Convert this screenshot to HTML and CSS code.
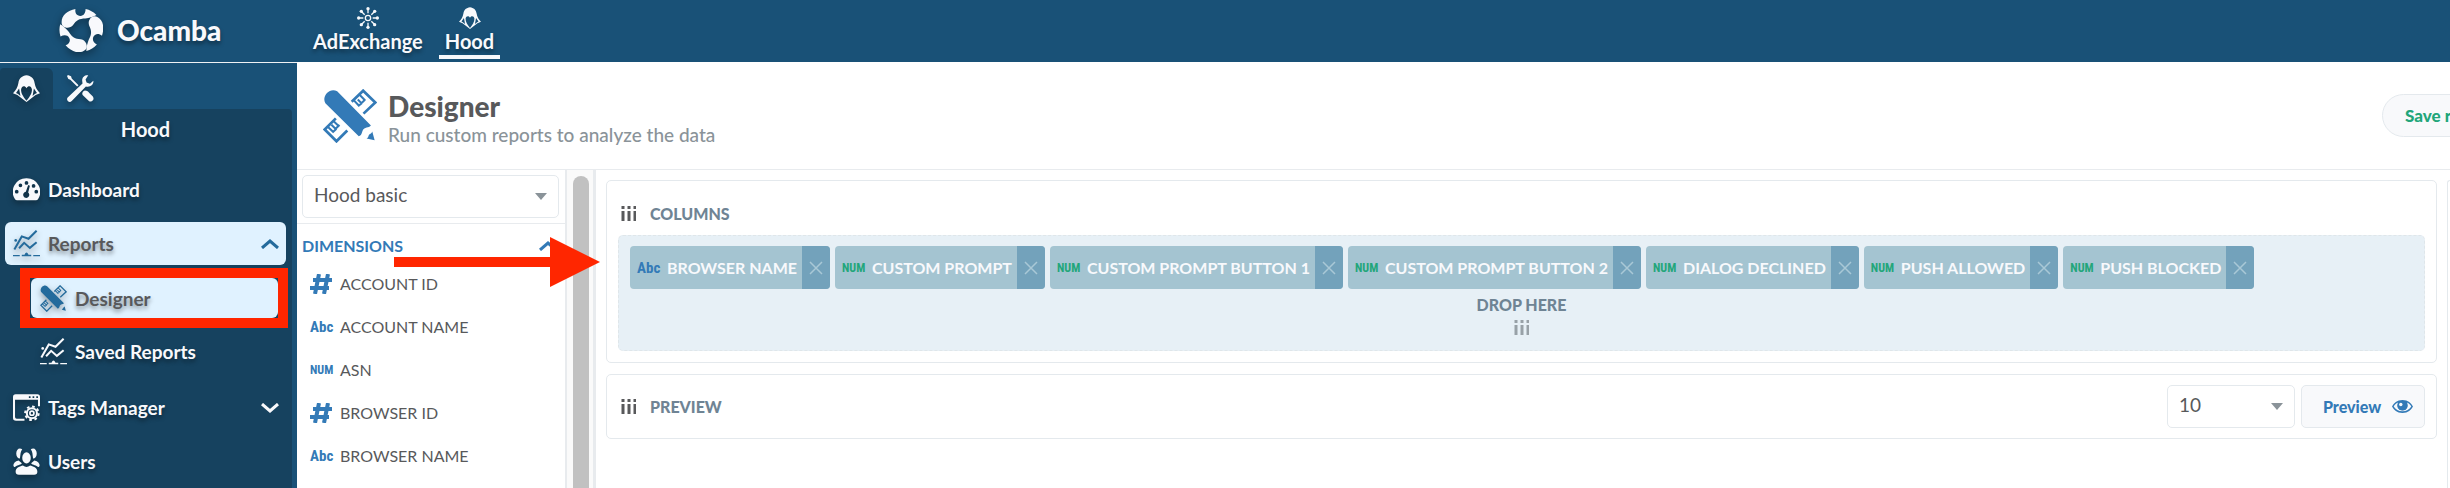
FILE: index.html
```html
<!DOCTYPE html>
<html lang="en">
<head>
<meta charset="utf-8">
<title>Ocamba Hood - Designer</title>
<link rel="stylesheet" href="styles.css">
</head>
<body>
<svg class="defs" aria-hidden="true">
  <symbol id="logo" viewBox="0 0 134 134">
    <g id="logo-arm"><path d="M114 21A66 66 0 0 0 81 3C81 14 76 24 65 24C54 24 48 15 50 3C26 8 8 22 8 42C6 62 32 66 43 52C52 38 62 32 80 32C92 30 104 27 114 21Z"/></g>
    <use href="#logo-arm" transform="rotate(120 67 67)"/>
    <use href="#logo-arm" transform="rotate(240 67 67)"/>
  </symbol>
  <symbol id="hood" viewBox="0 0 80 80">
    <path fill-rule="evenodd" d="M40 1C27 3 18 9 16 24C14 37 8 46 0 54L13 59L40 80L67 59L80 54C72 46 66 37 64 24C62 9 53 3 40 1ZM40 39C34 30 26 33 24 42C23 55 32 66 40 76C48 66 57 55 56 42C54 33 46 30 40 39ZM18 40L9 53L15 56L22 62ZM62 40L71 53L65 56L58 62Z"/>
  </symbol>
  <symbol id="tools" viewBox="0 0 80 80">
    <path d="M3 0L12 4L14 10L34 30L30 34L10 14L4 12L0 3Z"/>
    <path d="M63 1C54 -1 44 6 45 17L46 25L2 67C-1 71 0 75 3 78C7 81 11 80 14 77L56 34C68 38 80 28 78 17L68 26L58 22L55 13Z"/>
    <path d="M53 46C60 46 63 49 66 53L76 63C84 73 72 84 64 76L47 60C43 56 46 48 53 46Z"/>
  </symbol>
  <symbol id="exchange" viewBox="0 0 66 66">
    <g fill="none" stroke="currentColor" stroke-width="4">
      <circle cx="33" cy="33" r="8"/>
      <path d="M33 19V6M33 47V60M19 33H6M47 33H60M23 23L14 14M43 43L52 52M43 23L52 14M23 43L14 52"/>
    </g>
    <circle cx="33" cy="5" r="5"/><circle cx="33" cy="61" r="5"/><circle cx="5" cy="33" r="5"/><circle cx="61" cy="33" r="5"/>
    <circle cx="13" cy="13" r="5"/><circle cx="53" cy="53" r="5"/><circle cx="53" cy="13" r="5"/><circle cx="13" cy="53" r="5"/>
  </symbol>
  <symbol id="designer" viewBox="0 0 160 160">
    <path d="M7 42C-5 22 20 -6 42 7L142 108C136 116 122 112 118 122C114 130 116 136 106 140Z"/>
    <path d="M146 126L153 152L129 147C135 144 134 139 137 135C140 132 144 132 146 126Z"/>
    <g fill="none" stroke="currentColor" stroke-width="8">
      <path d="M85 38L119 5L155 40L120 73"/>
      <path d="M38 87L5 120L40 155L72 123"/>
      <path stroke-width="6" d="M91 33L106 49L115 42M103 31L114 42L125 31M109 18L125 34"/>
      <path stroke-width="6" d="M14 112L30 127L40 118M25 106L37 118L49 107M30 94L48 111"/>
    </g>
  </symbol>
  <symbol id="reports" viewBox="0 0 80 80">
    <g fill="none" stroke="currentColor" stroke-width="6">
      <path d="M4 58L26 19L46 26L70 2M18 54L33 38L50 53L70 36"/>
      <path stroke-width="4" d="M0 76H20M60 76H80"/>
    </g>
    <path d="M26 78V73H34Q40 60 46 73H54V78Z"/><circle cx="8" cy="31" r="4"/>
  </symbol>
  <symbol id="dashboard" viewBox="0 0 80 66">
    <path fill-rule="evenodd" d="M40 0A40 40 0 0 0 6 62Q8 65 12 65H68Q72 65 74 62A40 40 0 0 0 40 0ZM40 8a5.500 5.500 0 1 1 0 11a5.500 5.500 0 1 1 0-11ZM22 15a5.500 5.500 0 1 1 0 11a5.500 5.500 0 1 1 0-11ZM11 34a5.500 5.500 0 1 1 0 11a5.500 5.500 0 1 1 0-11ZM61 17a5.500 5.500 0 1 1 0 11a5.500 5.500 0 1 1 0-11ZM69 34a5.500 5.500 0 1 1 0 11a5.500 5.500 0 1 1 0-11ZM45 20L50 22L45 42A9 9 0 1 1 38 40Z"/>
  </symbol>
  <symbol id="tags" viewBox="0 0 80 80">
    <path fill-rule="evenodd" d="M8 1H72Q80 1 80 9V36H74V17H6V68Q6 73 11 73H34V79H9Q0 79 0 71V9Q0 1 8 1ZM47 7V12H52V7ZM58 7V12H63V7ZM69 7V12H74V7Z"/>
    <g fill="none" stroke="currentColor"><circle cx="56" cy="57" r="15" stroke-width="6"/><circle cx="56" cy="57" r="6" stroke-width="5"/>
    <circle cx="56" cy="57" r="20" stroke-width="6" stroke-dasharray="7.800 7.900"/></g>
  </symbol>
  <symbol id="users" viewBox="0 0 82 82">
    <ellipse cx="41" cy="30" rx="13" ry="17"/>
    <path d="M8 72C8 58 22 56 30 53Q41 62 52 53C60 56 74 58 74 72Q74 81 64 81H18Q8 81 8 72Z"/>
    <path d="M28 4C18 -3 9 6 10 18C10 26 15 32 21 32C23 20 22 12 28 4ZM54 4C64 -3 73 6 72 18C72 26 67 32 61 32C59 20 60 12 54 4Z"/>
    <path d="M17 38L27 46C22 52 10 52 6 58C-2 58 -1 42 17 38ZM65 38L55 46C60 52 72 52 76 58C84 58 83 42 65 38Z"/>
  </symbol>
  <symbol id="chevron" viewBox="0 0 18 10"><path fill="none" stroke="currentColor" stroke-width="3" d="M1 1L9 8L17 1"/></symbol>
  <symbol id="hash" viewBox="0 0 22 20"><path fill="none" stroke="currentColor" stroke-width="4" d="M3 6H22M0 14H19M9 0L5 20M18 0L14 20"/></symbol>
  <symbol id="grip" viewBox="0 0 15 15"><path fill="none" stroke="currentColor" stroke-width="3" d="M2 0V3M8 0V3M14 0V3M2 5V15M8 5V15M14 5V15"/></symbol>
  <symbol id="cross" viewBox="0 0 14 14"><path fill="none" stroke="currentColor" stroke-width="1.500" d="M1 1L13 13M13 1L1 13"/></symbol>
  <symbol id="caret" viewBox="0 0 12 7"><path d="M0 0H12L6 7Z"/></symbol>
  <symbol id="eye" viewBox="0 0 62 38"><path fill-rule="evenodd" d="M31 0C48 0 56 9 62 19C56 29 48 38 31 38S6 29 0 19C6 9 14 0 31 0ZM18 7C11 10 8 14 5 19C11 28 19 33 31 33S51 28 57 19C54 14 51 10 44 7C50 17 45 30 31 30S12 17 18 7Z"/><circle cx="31" cy="17" r="14"/><circle cx="26" cy="13" r="5" fill="#f8f9fb"/></symbol>
</svg>

<header class="topbar">
  <a class="brand" href="#"><svg class="brand-logo"><use href="#logo"/></svg><span>Ocamba</span></a>
  <nav class="apps" aria-label="Applications">
    <a class="app" href="#"><svg class="app-icon"><use href="#exchange"/></svg><span>AdExchange</span></a>
    <a class="app app-active" href="#" aria-current="page"><svg class="app-icon"><use href="#hood"/></svg><span>Hood</span></a>
  </nav>
</header>

<div class="shell">
  <aside class="sidebar">
    <div class="side-tabs">
      <button class="side-tab side-tab-active" type="button" aria-label="Hood"><svg class="icon"><use href="#hood"/></svg></button>
      <button class="side-tab" type="button" aria-label="Settings"><svg class="icon"><use href="#tools"/></svg></button>
    </div>
    <nav class="side-panel" aria-label="Hood">
      <h2 class="side-title">Hood</h2>
      <a class="item" href="#"><svg class="icon"><use href="#dashboard"/></svg><span>Dashboard</span></a>
      <a class="item item-active" href="#"><svg class="icon"><use href="#reports"/></svg><span>Reports</span><svg class="chevron chevron-up"><use href="#chevron"/></svg></a>
      <div class="submenu">
        <a class="item sub item-active sub-active" href="#"><svg class="icon"><use href="#designer"/></svg><span>Designer</span></a>
        <a class="item sub" href="#"><svg class="icon"><use href="#reports"/></svg><span>Saved Reports</span></a>
        <div class="highlight"></div>
      </div>
      <a class="item" href="#"><svg class="icon"><use href="#tags"/></svg><span>Tags Manager</span><svg class="chevron"><use href="#chevron"/></svg></a>
      <a class="item" href="#"><svg class="icon"><use href="#users"/></svg><span>Users</span></a>
    </nav>
  </aside>

  <main class="page">
    <div class="page-head">
      <svg class="page-icon"><use href="#designer"/></svg>
      <div class="page-titles">
        <h1>Designer</h1>
        <p>Run custom reports to analyze the data</p>
      </div>
      <div class="page-actions"><button class="save" type="button">Save report</button></div>
    </div>

    <div class="workspace">
      <section class="fields">
        <div class="source">
          <div class="select-box">
            <select aria-label="Data source"><option>Hood basic</option></select>
            <svg class="caret"><use href="#caret"/></svg>
          </div>
        </div>
        <button class="group" type="button"><span>DIMENSIONS</span><svg class="group-chevron"><use href="#chevron"/></svg></button>
        <ul class="field-list">
          <li><svg class="hash"><use href="#hash"/></svg><span>ACCOUNT ID</span></li>
          <li><span class="type">Abc</span><span>ACCOUNT NAME</span></li>
          <li><span class="type type-num">NUM</span><span>ASN</span></li>
          <li><svg class="hash"><use href="#hash"/></svg><span>BROWSER ID</span></li>
          <li><span class="type">Abc</span><span>BROWSER NAME</span></li>
        </ul>
      </section>
      <div class="scroll-track"><div class="scroll-thumb"></div></div>
      <svg class="arrow" viewBox="0 0 206 50"><path d="M0 20H156V0L206 25L156 50V30H0Z"/></svg>

      <div class="builder">
        <section class="card">
          <div class="card-head"><svg class="grip"><use href="#grip"/></svg><h3>COLUMNS</h3></div>
          <div class="dropzone">
            <div class="chips">
              <div class="chip"><span class="type">Abc</span><span class="chip-label">BROWSER NAME</span><button type="button" aria-label="Remove Browser name"><svg class="cross"><use href="#cross"/></svg></button></div>
              <div class="chip"><span class="type type-num">NUM</span><span class="chip-label">CUSTOM PROMPT</span><button type="button" aria-label="Remove Custom prompt"><svg class="cross"><use href="#cross"/></svg></button></div>
              <div class="chip"><span class="type type-num">NUM</span><span class="chip-label">CUSTOM PROMPT BUTTON 1</span><button type="button" aria-label="Remove Custom prompt button 1"><svg class="cross"><use href="#cross"/></svg></button></div>
              <div class="chip"><span class="type type-num">NUM</span><span class="chip-label">CUSTOM PROMPT BUTTON 2</span><button type="button" aria-label="Remove Custom prompt button 2"><svg class="cross"><use href="#cross"/></svg></button></div>
              <div class="chip"><span class="type type-num">NUM</span><span class="chip-label">DIALOG DECLINED</span><button type="button" aria-label="Remove Dialog declined"><svg class="cross"><use href="#cross"/></svg></button></div>
              <div class="chip"><span class="type type-num">NUM</span><span class="chip-label">PUSH ALLOWED</span><button type="button" aria-label="Remove Push allowed"><svg class="cross"><use href="#cross"/></svg></button></div>
              <div class="chip"><span class="type type-num">NUM</span><span class="chip-label">PUSH BLOCKED</span><button type="button" aria-label="Remove Push blocked"><svg class="cross"><use href="#cross"/></svg></button></div>
            </div>
            <div class="drop-hint"><span>DROP HERE</span><svg class="grip"><use href="#grip"/></svg></div>
          </div>
        </section>
        <section class="card card-preview">
          <div class="card-head"><svg class="grip"><use href="#grip"/></svg><h3>PREVIEW</h3></div>
          <div class="select-box rows-select">
            <select aria-label="Rows"><option>10</option></select>
            <svg class="caret"><use href="#caret"/></svg>
          </div>
          <button class="preview" type="button"><span>Preview</span><svg class="eye"><use href="#eye"/></svg></button>
        </section>
      </div>
      <div class="side-card"></div>
    </div>
  </main>
</div>
</body>
</html>
```

FILE: styles.css
```css
* { box-sizing: border-box; }
html, body { height: 100%; }
body {
  margin: 0;
  display: flex;
  flex-direction: column;
  overflow: hidden;
  font-family: Lato, "Open Sans", sans-serif;
  font-size: 16px;
  color: #58595b;
  background: #fff;
}
h1, h2, h3, p, ul { margin: 0; padding: 0; }
a { color: inherit; text-decoration: none; }
button { font: inherit; color: inherit; border: 0; padding: 0; background: none; cursor: pointer; }
svg { fill: currentColor; flex: none; overflow: visible; }
.defs { position: absolute; width: 0; height: 0; }

.topbar {
  flex: none;
  display: flex;
  height: 62px;
  background: #195177;
  color: #f8f9fc;
  text-shadow: 0 3px 4px rgba(0, 0, 0, .4);
}
.brand {
  display: flex;
  align-items: center;
  gap: 14px;
  width: 297px;
  padding: 0 0 3px 59px;
  font-size: 28px;
  font-weight: 900;
}
.brand-logo { width: 44px; height: 44px; filter: drop-shadow(0 3px 4px rgba(0, 0, 0, .4)); }
.apps { display: flex; padding-left: 5px; }
.app {
  display: flex;
  flex-direction: column;
  align-items: center;
  height: 59px;
  padding: 7px 6px 0;
  margin: 0 5px;
  border-bottom: 4px solid transparent;
  font-size: 20px;
  line-height: 24px;
  font-weight: 700;
}
.app-icon { width: 22px; height: 22px; }
.app-active { border-color: #f8f9fc; }

.shell { flex: 1; display: flex; min-height: 0; }
.sidebar {
  flex: none;
  display: flex;
  flex-direction: column;
  width: 297px;
  padding-right: 5px;
  border-top: 1px solid #f0f2f5;
  background: #195177;
  color: #f8f9fc;
}
.side-tabs { flex: none; display: flex; height: 46px; padding-top: 5px; }
.side-tab { display: flex; align-items: center; justify-content: center; width: 53px; }
.side-tab + .side-tab { padding-left: 1px; }
.side-tab-active { background: #16425f; border-radius: 4px 6px 0 0; }
.icon { width: 27px; height: 27px; filter: drop-shadow(0 3px 3px rgba(0, 0, 0, .35)); }
.side-panel {
  flex: 1;
  min-height: 0;
  background: #16425f;
  border-radius: 0 4px 0 0;
  padding: 4px 6px 0 5px;
  font-size: 19px;
  font-weight: 700;
  text-shadow: 0 3px 4px rgba(0, 0, 0, .4);
}
.side-title { font-size: 20px; line-height: 32px; text-align: center; margin-bottom: 23px; }
.item {
  display: flex;
  align-items: center;
  gap: 8px;
  height: 43px;
  padding: 0 7px 0 8px;
  margin-bottom: 11px;
  border-radius: 6px;
}
.item-active { background: #e0f2ff; color: #58595b; }
.item-active svg { color: #246b9c; }
.chevron { width: 18px; height: 10px; margin-left: auto; }
.chevron-up { transform: rotate(180deg); }
.submenu { position: relative; margin: 0 8px 15px 26px; }
.sub { height: 40px; margin-bottom: 13px; padding-left: 9px; }
.sub-active { margin-top: 13px; }
.highlight { position: absolute; inset: -10px -10px 43px -11px; border: 10px solid #ff2600; }

.page { flex: 1; min-width: 0; display: flex; flex-direction: column; }
.page-head {
  flex: none;
  display: flex;
  align-items: center;
  height: 108px;
  padding-left: 26px;
  border-bottom: 1px solid #e8ebee;
}
.page-icon { width: 54px; height: 54px; color: #337ab7; }
.page-titles { flex: 1; padding: 6px 0 0 11px; }
.page-titles h1 { font-size: 28px; line-height: 32px; font-weight: 900; }
.page-titles p { font-size: 19px; line-height: 26px; color: #8a9399; font-weight: 500; }
.page-actions { width: 68px; overflow: hidden; }
.save {
  height: 43px;
  padding: 0 22px;
  border: 1px solid #e4e9ed;
  border-radius: 22px;
  background: #f8f9fb;
  color: #22a67a;
  font-size: 17px;
  font-weight: 900;
  white-space: nowrap;
}

.workspace { position: relative; flex: 1; display: flex; min-height: 0; }
.fields { flex: none; width: 270px; border-right: 2px solid #e8ebee; }
.source { padding: 5px 6px 5px 5px; border-bottom: 1px solid #e8ebee; }
.select-box { position: relative; height: 43px; }
.select-box select {
  width: 100%;
  height: 100%;
  padding: 0 11px 5px;
  border: 1px solid #e4e9ed;
  border-radius: 5px;
  background: #fff;
  color: #58595b;
  font: inherit;
  font-size: 19px;
  appearance: none;
}
.caret { position: absolute; right: 12px; top: 18px; width: 12px; height: 7px; color: #8a9399; pointer-events: none; }
.group {
  display: flex;
  align-items: center;
  justify-content: space-between;
  width: 100%;
  height: 43px;
  padding: 0 8px 0 5px;
  color: #337ab7;
  font-weight: 700;
}
.group-chevron { width: 18px; height: 10px; transform: rotate(180deg); }
.field-list { list-style: none; }
.field-list li { display: flex; align-items: center; gap: 8px; height: 43px; padding: 0 0 9px 13px; line-height: 34px; }
.hash { width: 22px; height: 20px; color: #337ab7; }
.type {
  flex: none;
  width: 22px;
  color: #337ab7;
  font-family: "Roboto Condensed", "Liberation Sans Narrow", Roboto, sans-serif;
  font-size: 15px;
  font-weight: 700;
}
.type-num { font-size: 12px; }
.scroll-track { flex: none; width: 29px; padding: 6px 4px 0 6px; background: #fafafa; border-right: 3px solid #e8ebee; }
.scroll-thumb { height: 100%; background: #c1c1c1; border-radius: 8px 8px 0 0; }
.arrow { position: absolute; left: 97px; top: 67px; width: 206px; height: 50px; color: #ff2600; }

.builder { flex: 1; min-width: 0; padding: 10px 10px 0; display: flex; flex-direction: column; gap: 11px; }
.card { border: 1px solid #e4e9ed; border-radius: 5px; padding: 11px; }
.card-head { display: flex; align-items: center; gap: 14px; padding: 0 3px; height: 43px; color: #58595b; }
.card-head h3 { font-size: 16px; font-weight: 900; color: #6f8494; }
.grip { width: 15px; height: 15px; }
.dropzone { height: 116px; padding: 10px 11px; border: 1px dashed #dfe6ea; border-radius: 5px; background: #e7f0f6; }
.chips { display: flex; gap: 5px; }
.chip {
  display: flex;
  align-items: center;
  height: 43px;
  padding-left: 7px;
  border-radius: 4px;
  overflow: hidden;
  background: #a4c4d1;
  color: #f8f9fc;
  white-space: nowrap;
}
.chip-label { padding: 0 5px 0 8px; font-weight: 700; }
.chip .type-num { color: #22a67a; }
.chip button { display: flex; align-items: center; justify-content: center; width: 28px; height: 100%; background: #73a2bb; color: #a9c8d6; }
.cross { width: 14px; height: 14px; }
.drop-hint { display: flex; flex-direction: column; align-items: center; gap: 5px; padding-top: 6px; font-weight: 900; line-height: 20px; color: #6f8494; }
.drop-hint .grip { color: #98a1a7; }
.card-preview { display: flex; align-items: center; padding: 10px 11px; }
.rows-select { width: 128px; margin-left: auto; }
.preview {
  display: flex;
  align-items: center;
  justify-content: center;
  gap: 11px;
  width: 124px;
  height: 43px;
  margin-left: 6px;
  padding-left: 10px;
  border: 1px solid #e4e9ed;
  border-radius: 5px;
  background: #f8f9fb;
  color: #337ab7;
  font-weight: 900;
}
.eye { width: 21px; height: 13px; }
.side-card { flex: none; width: 3px; margin-top: 10px; border: solid #e4e9ed; border-width: 1px 0 0 1px; border-radius: 5px 0 0 0; }
```
